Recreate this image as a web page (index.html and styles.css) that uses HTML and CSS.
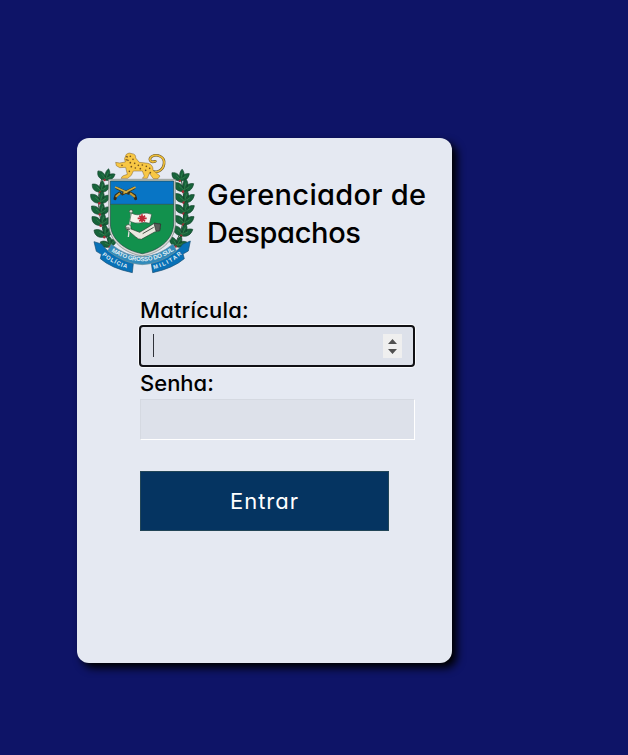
FILE: index.html
```html
<!DOCTYPE html>
<html lang="pt-BR">
<head>
<meta charset="utf-8">
<title>Gerenciador de Despachos</title>
<link rel="stylesheet" href="styles.css">
</head>
<body>
<main class="card">
  <header class="brand">
    <svg class="crest" viewBox="0 0 375 420" aria-hidden="true">
      <defs>
        <g id="sprig">
          <path d="M0 5C-25 5-30-9-29-22C-13-24-3-15 0 0C-7-15-2-27 5-34C15-21 14-8 0 0C4-14 15-21 29-19C26-2 15 6 0 5Z" fill="#17633b" stroke="#124129" stroke-width="2"/>
          <path d="M0 0L-15-13M0 0L6-22M0 0L16-10" stroke="#3b8952" stroke-width="2"/>
          <circle cx="-3" cy="5" r="4" fill="#a52c35"/>
        </g>
        <path id="motto" d="M94 334Q187 394 281 332"/>
        <path id="left" d="M66 345Q94 371 145 387"/>
        <path id="right" d="M222 388Q276 372 310 338"/>
      </defs>
      <g fill="none" stroke="#3b5741" stroke-width="3">
        <path d="M68 105Q47 170 61 235Q70 290 101 323"/>
        <path d="M302 110Q317 180 310 240Q302 290 274 327"/>
      </g>
      <use href="#sprig" transform="translate(77 116) rotate(8) scale(.9)"/>
      <use href="#sprig" transform="translate(63 152) scale(.9)"/>
      <use href="#sprig" transform="translate(61 185)"/>
      <use href="#sprig" transform="translate(62 219) scale(.95)"/>
      <use href="#sprig" transform="translate(65 252)"/>
      <use href="#sprig" transform="translate(75 286) rotate(-12)"/>
      <use href="#sprig" transform="translate(90 316) rotate(-18) scale(.85)"/>
      <use href="#sprig" transform="translate(302 118) scale(.9)"/>
      <use href="#sprig" transform="translate(312 150)"/>
      <use href="#sprig" transform="translate(314 183)"/>
      <use href="#sprig" transform="translate(314 216)"/>
      <use href="#sprig" transform="translate(313 249)"/>
      <use href="#sprig" transform="translate(307 283) rotate(8)"/>
      <use href="#sprig" transform="translate(291 316) rotate(15) scale(.9)"/>
      <path d="M86 118H286V249C286 307 235 340 187 348C137 340 86 307 86 249Z" fill="#d6d8d5" stroke="#77827e" stroke-width="2"/>
      <path d="M91 123H281V193H91Z" fill="#0875c5"/>
      <path d="M91 193H281V249C281 302 231 333 187 341C141 333 91 302 91 249Z" fill="#12914d"/>
      <path d="M91 193H281M91 123V249C91 302 141 333 187 341C231 333 281 302 281 249V123Z" fill="none" stroke="#204743" stroke-width="2"/>
      <g fill="none" stroke-linecap="round">
        <path d="M207 88C227 104 249 92 252 72C256 50 231 41 216 49C203 57 212 70 226 64" stroke="#655327" stroke-width="8"/>
        <path d="M207 88C227 104 249 92 252 72C256 50 231 41 216 49C203 57 212 70 226 64" stroke="#edbd39" stroke-width="5"/>
      </g>
      <path d="M139 43Q147 36 156 41Q168 42 167 54L178 67L204 70Q220 74 219 91L240 108L234 116H220L208 100L202 115H187L193 108L187 93L160 93L154 106L143 115H123L128 108L142 103L137 82L119 83L109 77L107 67L119 69L136 66Q130 57 139 43Z" fill="#f8c744" stroke="#806128" stroke-width="1.5"/>
      <path d="M138 50L144 51M137 59L146 61" stroke="#5b3d20" stroke-width="3"/>
      <g fill="#705020"><circle cx="151" cy="49" r="2.5"/><circle cx="159" cy="58" r="2.5"/><circle cx="151" cy="68" r="2.5"/><circle cx="164" cy="70" r="2.5"/><circle cx="175" cy="76" r="2.5"/><circle cx="187" cy="75" r="2.5"/><circle cx="199" cy="79" r="2.5"/><circle cx="209" cy="85" r="2.5"/><circle cx="154" cy="80" r="2.5"/><circle cx="166" cy="84" r="2.5"/><circle cx="181" cy="86" r="2.5"/><circle cx="197" cy="91" r="2.5"/><circle cx="148" cy="94" r="2.5"/><circle cx="211" cy="98" r="2.5"/><circle cx="126" cy="76" r="2.5"/></g>
      <g fill="none" stroke-linecap="round">
        <path d="M110 144L145 160M162 144L127 162" stroke="#38351f" stroke-width="8"/>
        <path d="M107 142L140 157M165 142L132 159" stroke="#d0aa40" stroke-width="5"/>
        <path d="M119 159L108 167L105 176M151 159L164 167L167 176" stroke="#302b1b" stroke-width="9"/>
        <path d="M118 161L109 169M152 161L163 169" stroke="#c39a35" stroke-width="6"/>
      </g>
      <path d="M154 216L145 291" stroke="#e1e1dc" stroke-width="4"/>
      <path d="M154 219Q172 229 188 220Q201 217 215 223L209 250Q192 245 181 249Q165 252 149 244Z" fill="#f5f3ed" stroke="#29523d" stroke-width="2"/>
      <path d="M186 223V247M173 235H200M178 227L195 244M195 227L178 244" stroke="#bd2735" stroke-width="5"/>
      <circle cx="153" cy="214" r="5" fill="#dae0d9" stroke="#31503c" stroke-width="2"/>
      <path d="M137 258Q145 249 153 259L153 267L179 277L207 260L224 249L242 253L239 272L224 276L184 298Q175 299 166 290L145 272Q136 270 137 258Z" fill="#e9e8df" stroke="#293c31" stroke-width="2"/>
      <path d="M222 250L242 252L239 272L228 273Z" fill="#5a5f5a" stroke="#252c28" stroke-width="2"/>
      <path d="M188 281L221 262M137 264H148M140 269L151 267" stroke="#4b514a" stroke-width="3"/>
      <path d="M42 305L65 312Q84 345 160 370L157 398Q94 385 61 356L64 343L49 334Z" fill="#0871b7" stroke="#174d73" stroke-width="2"/>
      <path d="M331 303L309 312Q284 349 214 370L218 398Q279 385 313 356L309 342L325 333Z" fill="#0871b7" stroke="#174d73" stroke-width="2"/>
      <path d="M94 313Q187 387 279 312L290 333Q241 372 187 374Q132 371 83 332Z" fill="#328bbb" stroke="#6f929f" stroke-width="2"/>
      <g class="crest-text">
        <text font-size="18"><textPath href="#motto" textLength="200">MATO GROSSO DO SUL</textPath></text>
        <text font-size="17"><textPath href="#left" textLength="85">POLÍCIA</textPath></text>
        <text font-size="17"><textPath href="#right" textLength="96">MILITAR</textPath></text>
      </g>
    </svg>
    <h1 class="title"><span class="title-top">Gerenciador de</span><br><span class="title-bottom">Despachos</span></h1>
  </header>
  <form class="login">
    <label class="label label-id" for="matricula">Matrícula:</label>
    <div class="field field-active">
      <input class="input" id="matricula" type="text" inputmode="numeric">
      <span class="caret"></span>
      <svg class="spinner" viewBox="0 0 19 24" aria-hidden="true"><path d="M5 10L9.5 5L14 10ZM5 15H14L9.5 20Z"/></svg>
    </div>
    <label class="label label-password" for="senha">Senha:</label>
    <div class="field"><input class="input" id="senha" type="password"></div>
    <button class="submit" type="button">Entrar</button>
  </form>
</main>
</body>
</html>
```
FILE: styles.css
```css
* { box-sizing: border-box; }
body {
  margin: 0;
  min-height: 755px;
  padding: 138px 0 0 77px;
  background: #0e1467;
  color: #000;
  font-family: Inter, "Open Sans", sans-serif;
  font-feature-settings: "cv11" 1, "ss03" 1;
}
.card {
  width: 375px;
  height: 525px;
  border-radius: 12px;
  background: #e5e9f2;
  box-shadow: 5px 5px 8px #000;
}
.brand { display: flex; height: 156px; padding: 2px 0 0 3px; }
.crest { width: 125px; height: 140px; flex: none; }
.crest-text { fill: #e4f0f4; font-family: "Liberation Sans", sans-serif; font-weight: 700; }
.title {
  margin: 36px 0 0 2px;
  font-size: 29px;
  font-weight: 450;
  line-height: 38px;
  white-space: nowrap;
}
.title-top { letter-spacing: .3px; }
.title-bottom { letter-spacing: -.35px; }
.login { display: flex; flex-direction: column; width: 275px; margin-left: 63px; }
.label { height: 32px; font-size: 22px; font-weight: 450; line-height: 33px; }
.label-id { letter-spacing: .15px; }
.field { position: relative; height: 41px; }
.input {
  display: block;
  width: 100%;
  height: 41px;
  padding: 0 12px;
  border: 1px solid;
  border-color: #d5d9e1 #fff #fff #d5d9e1;
  outline: 0;
  background: #dde1ea;
  font: inherit;
}
.field-active .input {
  width: 276px;
  margin-left: -1px;
  height: 42px;
  margin-top: -1px;
  border: 2px solid #101014;
  border-radius: 4px;
  box-shadow: 0 0 0 1px #f8fafc;
}
.caret { position: absolute; left: 13px; top: 8px; width: 1px; height: 23px; background: #30323a; }
.spinner { position: absolute; right: 13px; top: 8px; width: 19px; height: 24px; background: #efefef; fill: #505050; }
.submit {
  width: 249px;
  height: 60px;
  margin-top: 31px;
  padding: 0;
  border: 1px solid #214557;
  background: #053461;
  color: #fff;
  font: 400 22px/58px Inter, sans-serif;
  font-feature-settings: inherit;
  letter-spacing: 1px;
}
```
